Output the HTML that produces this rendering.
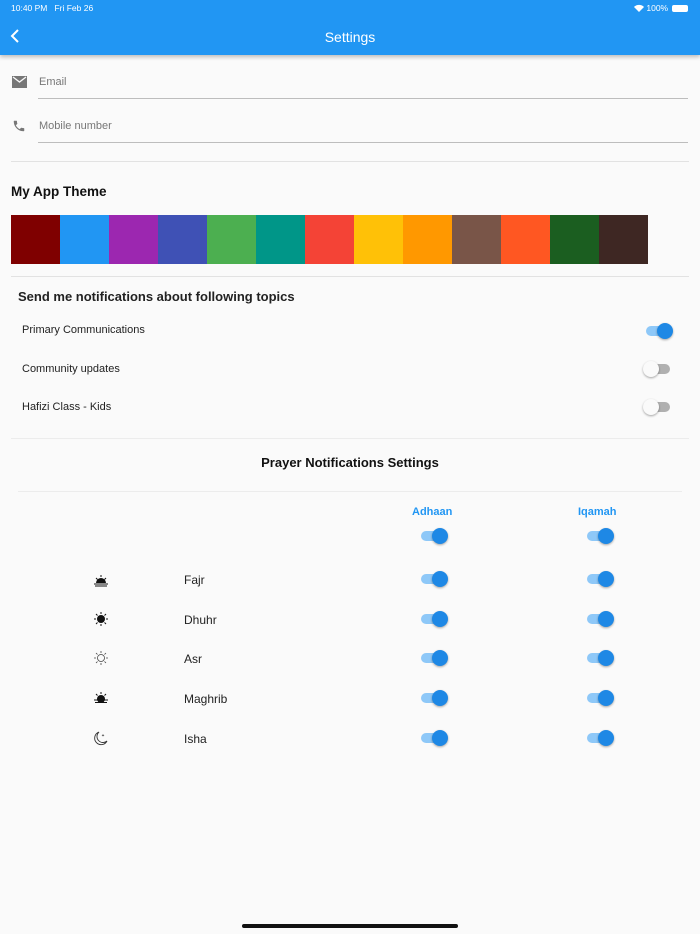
<!DOCTYPE html>
<html><head><meta charset="utf-8"><style>
*{margin:0;padding:0;box-sizing:border-box}
body{width:700px;height:934px;background:#fafafa;font-family:"Liberation Sans",sans-serif;position:relative;overflow:hidden;color:#111}
.a{position:absolute}
.hdr{left:0;top:0;width:700px;height:55px;background:#2196f3;box-shadow:0 2px 4px rgba(0,0,0,.25)}
.line{height:1px;background:#e2e2e2}
.tr{width:24px;height:10px;border-radius:5px}
.th{width:16px;height:16px;border-radius:50%;box-shadow:0 1px 2px rgba(0,0,0,.35)}
.on .tr{background:#8ec8f8}.on .th{background:#1e88e5}
.off .tr{background:#b0b0b0}.off .th{background:#fafafa}
.sw{width:30px;height:16px}
.lbl{font-size:12px;color:#222}
</style></head><body>
<div class="a hdr"></div>
<div class="a" style="left:11px;top:3px;color:#fff;font-size:8.5px">10:40 PM&nbsp;&nbsp;&nbsp;Fri Feb 26</div>
<div class="a" style="left:634px;top:3px;color:#fff;font-size:8.5px">
<svg width="10" height="8" viewBox="0 0 10 8" style="vertical-align:-1px"><path d="M0 3a7 7 0 0 1 10 0L5 8z" fill="#fff"/></svg> 100%</div>
<div class="a" style="left:672px;top:5px;width:16px;height:7px;border:1px solid #fff;border-radius:2px;background:#fff"></div>
<svg class="a" style="left:9px;top:28px" width="12" height="16" viewBox="0 0 12 16"><path d="M9 2L3 8l6 6" stroke="#fff" stroke-width="2" fill="none"/></svg>
<div class="a" style="left:0;width:700px;top:29px;text-align:center;color:#fff;font-size:14px">Settings</div>

<svg class="a" style="left:12px;top:76px" width="15" height="12" viewBox="0 0 15 12"><rect width="15" height="12" fill="#777"/><path d="M1 1l6.5 5L14 1" stroke="#fafafa" stroke-width="1.3" fill="none"/></svg>
<div class="a" style="left:39px;top:76px;font-size:11px;color:#777">Email</div>
<div class="a line" style="left:38px;top:98px;width:650px;background:#bdbdbd"></div>
<svg class="a" style="left:12px;top:119px" width="14" height="14" viewBox="0 0 24 24"><path fill="#777" d="M6.6 10.8c1.4 2.8 3.8 5.1 6.6 6.6l2.2-2.2c.3-.3.7-.4 1-.2 1.1.4 2.3.6 3.6.6.6 0 1 .4 1 1V20c0 .6-.4 1-1 1C10.6 21 3 13.4 3 4c0-.6.4-1 1-1h3.5c.6 0 1 .4 1 1 0 1.3.2 2.5.6 3.6.1.3 0 .7-.2 1z"/></svg>
<div class="a" style="left:39px;top:120px;font-size:11px;color:#777">Mobile number</div>
<div class="a line" style="left:38px;top:142px;width:650px;background:#bdbdbd"></div>

<div class="a line" style="left:11px;top:161px;width:678px"></div>
<div class="a" style="left:11px;top:184px;font-size:13.5px;font-weight:bold">My App Theme</div>
<div class="a" style="left:11px;top:215px;height:49px;display:flex">
<div style="width:49px;background:#7f0000"></div><div style="width:49px;background:#2196f3"></div><div style="width:49px;background:#9c27b0"></div><div style="width:49px;background:#3f51b5"></div><div style="width:49px;background:#4caf50"></div><div style="width:49px;background:#009688"></div><div style="width:49px;background:#f44336"></div><div style="width:49px;background:#ffc107"></div><div style="width:49px;background:#ff9800"></div><div style="width:49px;background:#795548"></div><div style="width:49px;background:#ff5722"></div><div style="width:49px;background:#1b5e20"></div><div style="width:49px;background:#3e2723"></div></div>
<div class="a line" style="left:11px;top:276px;width:678px"></div>
<div class="a" style="left:18px;top:289px;font-size:13px;font-weight:bold;color:#222">Send me notifications about following topics</div>
<div class="a lbl" style="left:22px;top:324px;font-size:11px">Primary Communications</div>
<div class="a lbl" style="left:22px;top:363px;font-size:11px">Community updates</div>
<div class="a lbl" style="left:22px;top:401px;font-size:11px">Hafizi Class - Kids</div>

<div class="a line" style="left:11px;top:438px;width:678px;background:#ececec"></div>
<div class="a" style="left:0;width:700px;top:455px;text-align:center;font-size:13px;font-weight:bold">Prayer Notifications Settings</div>
<div class="a line" style="left:18px;top:491px;width:664px;background:#ececec"></div>
<div class="a" style="left:412px;top:506px;font-size:11px;font-weight:bold;color:#2196f3">Adhaan</div>
<div class="a" style="left:578px;top:506px;font-size:11px;font-weight:bold;color:#2196f3">Iqamah</div>

<div class="a lbl" style="left:184px;top:573px">Fajr</div>
<div class="a lbl" style="left:184px;top:613px">Dhuhr</div>
<div class="a lbl" style="left:184px;top:652px">Asr</div>
<div class="a lbl" style="left:184px;top:692px">Maghrib</div>
<div class="a lbl" style="left:184px;top:732px">Isha</div>

<svg class="a" style="left:93px;top:573px" width="16" height="14" viewBox="0 0 16 14"><path d="M3 10a5 5 0 0 1 10 0z" fill="#111"/><path d="M1 11h14M2 13h12M8 2v2M3 5l1.5 1.5M13 5l-1.5 1.5" stroke="#111" stroke-width="1"/></svg>
<svg class="a" style="left:93px;top:611px" width="16" height="16" viewBox="0 0 16 16"><circle cx="8" cy="8" r="4" fill="#111"/><path d="M8 1v2M8 13v2M1 8h2M13 8h2M3 3l1.5 1.5M13 3l-1.5 1.5M3 13l1.5-1.5M13 13l-1.5-1.5" stroke="#111"/></svg>
<svg class="a" style="left:93px;top:650px" width="16" height="16" viewBox="0 0 16 16"><circle cx="8" cy="8" r="3.5" fill="none" stroke="#444" stroke-width=".8"/><path d="M8 1v2M8 13v2M1 8h2M13 8h2M3 3l1.5 1.5M13 3l-1.5 1.5M3 13l1.5-1.5M13 13l-1.5-1.5" stroke="#444" stroke-width=".8"/></svg>
<svg class="a" style="left:93px;top:691px" width="16" height="14" viewBox="0 0 16 14"><circle cx="8" cy="8" r="4" fill="#111"/><path d="M1 9h14M2 11.5h12M8 1v2M3 3l1.5 1.5M13 3l-1.5 1.5" stroke="#111"/></svg>
<svg class="a" style="left:93px;top:730px" width="16" height="16" viewBox="0 0 16 16"><path d="M6 2a6.5 6.5 0 1 0 8 9A6 6 0 0 1 6 2z" fill="none" stroke="#333" stroke-width=".9"/><path d="M10 4l.5 1 1 .3-1 .3-.5 1-.5-1-1-.3 1-.3z" fill="#333"/></svg>

<!-- switches: container left = center-15 -->
<div id="sw"></div>
<script>
var s=[[658,331,1],[658,369,0],[658,407,0],[433,536,1],[599,536,1],[433,579,1],[599,579,1],[433,619,1],[599,619,1],[433,658,1],[599,658,1],[433,698,1],[599,698,1],[433,738,1],[599,738,1]],h='';
s.forEach(function(a){var on=a[2];h+='<div class="a sw '+(on?'on':'off')+'" style="left:'+(a[0]-15)+'px;top:'+(a[1]-8)+'px"><div class="a tr" style="left:3px;top:3px"></div><div class="a th" style="left:'+(on?14:0)+'px;top:0"></div></div>';});
document.getElementById('sw').innerHTML=h;
</script>
<div class="a" style="left:242px;top:924px;width:216px;height:4px;border-radius:2px;background:#111"></div>
</body></html>
